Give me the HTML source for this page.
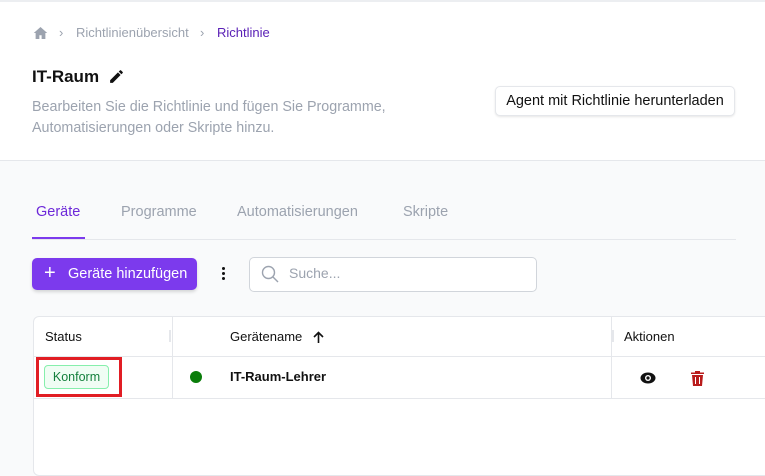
<html><head><style>
body{margin:0;width:765px;height:448px;overflow:hidden;font-family:"Liberation Sans",sans-serif;background:#f9fafb;position:relative}
.a{position:absolute;white-space:nowrap}
</style></head><body>
<div class="a" style="left:0;top:0;width:765px;height:161px;background:#fff;border-bottom:1px solid #e5e7eb;border-top:2px solid #eceef1;box-sizing:border-box"></div>
<svg class="a" style="left:33px;top:26px" width="15" height="14" viewBox="0 0 20 18"><path d="M10 1L1 9h2.5v8h5v-5h3v5h5V9H19z" fill="#9ca3af"/></svg>
<div class="a" style="left:59px;top:25px;font-size:13px;color:#9ca3af">›</div>
<div class="a" style="left:76px;top:25px;font-size:13px;color:#9ca3af">Richtlinienübersicht</div>
<div class="a" style="left:200px;top:25px;font-size:13px;color:#9ca3af">›</div>
<div class="a" style="left:217px;top:25px;font-size:13px;color:#5b21b6">Richtlinie</div>
<div class="a" style="left:32px;top:67px;font-size:17px;font-weight:bold;color:#111">IT-Raum</div>
<svg class="a" style="left:108px;top:68px" width="17" height="17" viewBox="0 0 24 24"><path d="M3 17.25V21h3.75L17.8 9.94l-3.75-3.75zM20.7 7.04a1 1 0 000-1.41l-2.34-2.34a1 1 0 00-1.41 0l-1.83 1.83 3.75 3.75z" fill="#111"/></svg>
<div class="a" style="left:32px;top:97px;font-size:14.3px;color:#9ca3af;line-height:21px">Bearbeiten Sie die Richtlinie und fügen Sie Programme,<br>Automatisierungen oder Skripte hinzu.</div>
<div class="a" style="left:495px;top:86px;width:240px;height:30px;background:#fff;border:1px solid #e5e7eb;border-radius:5px;box-shadow:0 1px 2px rgba(0,0,0,.1);box-sizing:border-box;font-size:14.5px;color:#111;text-align:center;line-height:28px">Agent mit Richtlinie herunterladen</div>
<div class="a" style="left:32px;top:239px;width:704px;height:1px;background:#e5e7eb"></div>
<div class="a" style="left:32px;top:237px;width:53px;height:2px;background:#7c3aed"></div>
<div class="a" style="left:36px;top:204px;font-size:14.5px;color:#6d28d9">Geräte</div>
<div class="a" style="left:121px;top:204px;font-size:14.5px;color:#9ca3af">Programme</div>
<div class="a" style="left:237px;top:204px;font-size:14.5px;color:#9ca3af">Automatisierungen</div>
<div class="a" style="left:403px;top:204px;font-size:14.5px;color:#9ca3af">Skripte</div>
<div class="a" style="left:32px;top:258px;width:165px;height:32px;background:#7c3aed;border-radius:5px;box-shadow:0 2px 3px rgba(0,0,0,.15);color:#fff;font-size:14.5px;line-height:32px"><span style="position:absolute;left:12px;font-size:20px;top:-1px">+</span><span style="position:absolute;left:36px">Geräte hinzufügen</span></div>
<div class="a" style="left:222px;top:267px;width:3px;height:3px;background:#111;border-radius:2px;box-shadow:0 5px 0 #111,0 10px 0 #111"></div>
<div class="a" style="left:249px;top:257px;width:288px;height:35px;background:#fff;border:1px solid #d1d5db;border-radius:5px;box-sizing:border-box"></div>
<svg class="a" style="left:261px;top:265px" width="18" height="18" viewBox="0 0 18 18"><circle cx="7.5" cy="7.5" r="6" fill="none" stroke="#9ca3af" stroke-width="1.4"/><path d="M12 12l5 5" stroke="#9ca3af" stroke-width="1.4"/></svg>
<div class="a" style="left:289px;top:265px;font-size:14px;color:#9ca3af">Suche...</div>
<div class="a" style="left:33px;top:316px;width:740px;height:160px;background:#fff;border:1px solid #e5e7eb;border-radius:6px;box-sizing:border-box"></div>
<div class="a" style="left:33px;top:356px;width:732px;height:1px;background:#e5e7eb"></div>
<div class="a" style="left:33px;top:398px;width:732px;height:1px;background:#e5e7eb"></div>
<div class="a" style="left:172px;top:317px;width:1px;height:81px;background:#e5e7eb"></div>
<div class="a" style="left:611px;top:317px;width:1px;height:81px;background:#e5e7eb"></div>
<div class="a" style="left:169px;top:330px;width:2px;height:12px;background:#e5e7eb"></div>
<div class="a" style="left:612px;top:330px;width:2px;height:12px;background:#e5e7eb"></div>
<div class="a" style="left:45px;top:329px;font-size:13px;color:#111">Status</div>
<div class="a" style="left:230px;top:329px;font-size:13px;color:#111">Gerätename</div>
<svg class="a" style="left:313px;top:331px" width="11" height="12" viewBox="0 0 11 12"><path d="M5.5 12V1.5M1 6l4.5-4.5L10 6" fill="none" stroke="#111" stroke-width="1.6"/></svg>
<div class="a" style="left:624px;top:329px;font-size:13px;color:#111">Aktionen</div>
<div class="a" style="left:36px;top:357px;width:86px;height:40px;border:3px solid #e11d24;box-sizing:border-box"></div>
<div class="a" style="left:44px;top:365px;width:65px;height:24px;border:1px solid #86efac;background:#f0fdf4;border-radius:4px;box-sizing:border-box;color:#15803d;font-size:12.5px;text-align:center;line-height:22px">Konform</div>
<div class="a" style="left:190px;top:371px;width:12px;height:12px;border-radius:50%;background:#0a7d0a"></div>
<div class="a" style="left:230px;top:369px;font-size:13px;font-weight:bold;color:#111">IT-Raum-Lehrer</div>
<svg class="a" style="left:640px;top:372px" width="16" height="12" viewBox="0 0 16 12"><ellipse cx="8" cy="6" rx="7.5" ry="5.5" fill="#111"/><circle cx="8" cy="6" r="3" fill="#fff"/><circle cx="8" cy="6" r="1.6" fill="#111"/></svg>
<svg class="a" style="left:691px;top:371px" width="13" height="15" viewBox="0 0 13 15"><path d="M4 0h5v1.5h4V3H0V1.5h4zM1 4h11l-1 11H2z" fill="#b91c1c"/><path d="M4.5 6v7M8.5 6v7" stroke="#fff" stroke-width="1"/></svg>
</body></html>
